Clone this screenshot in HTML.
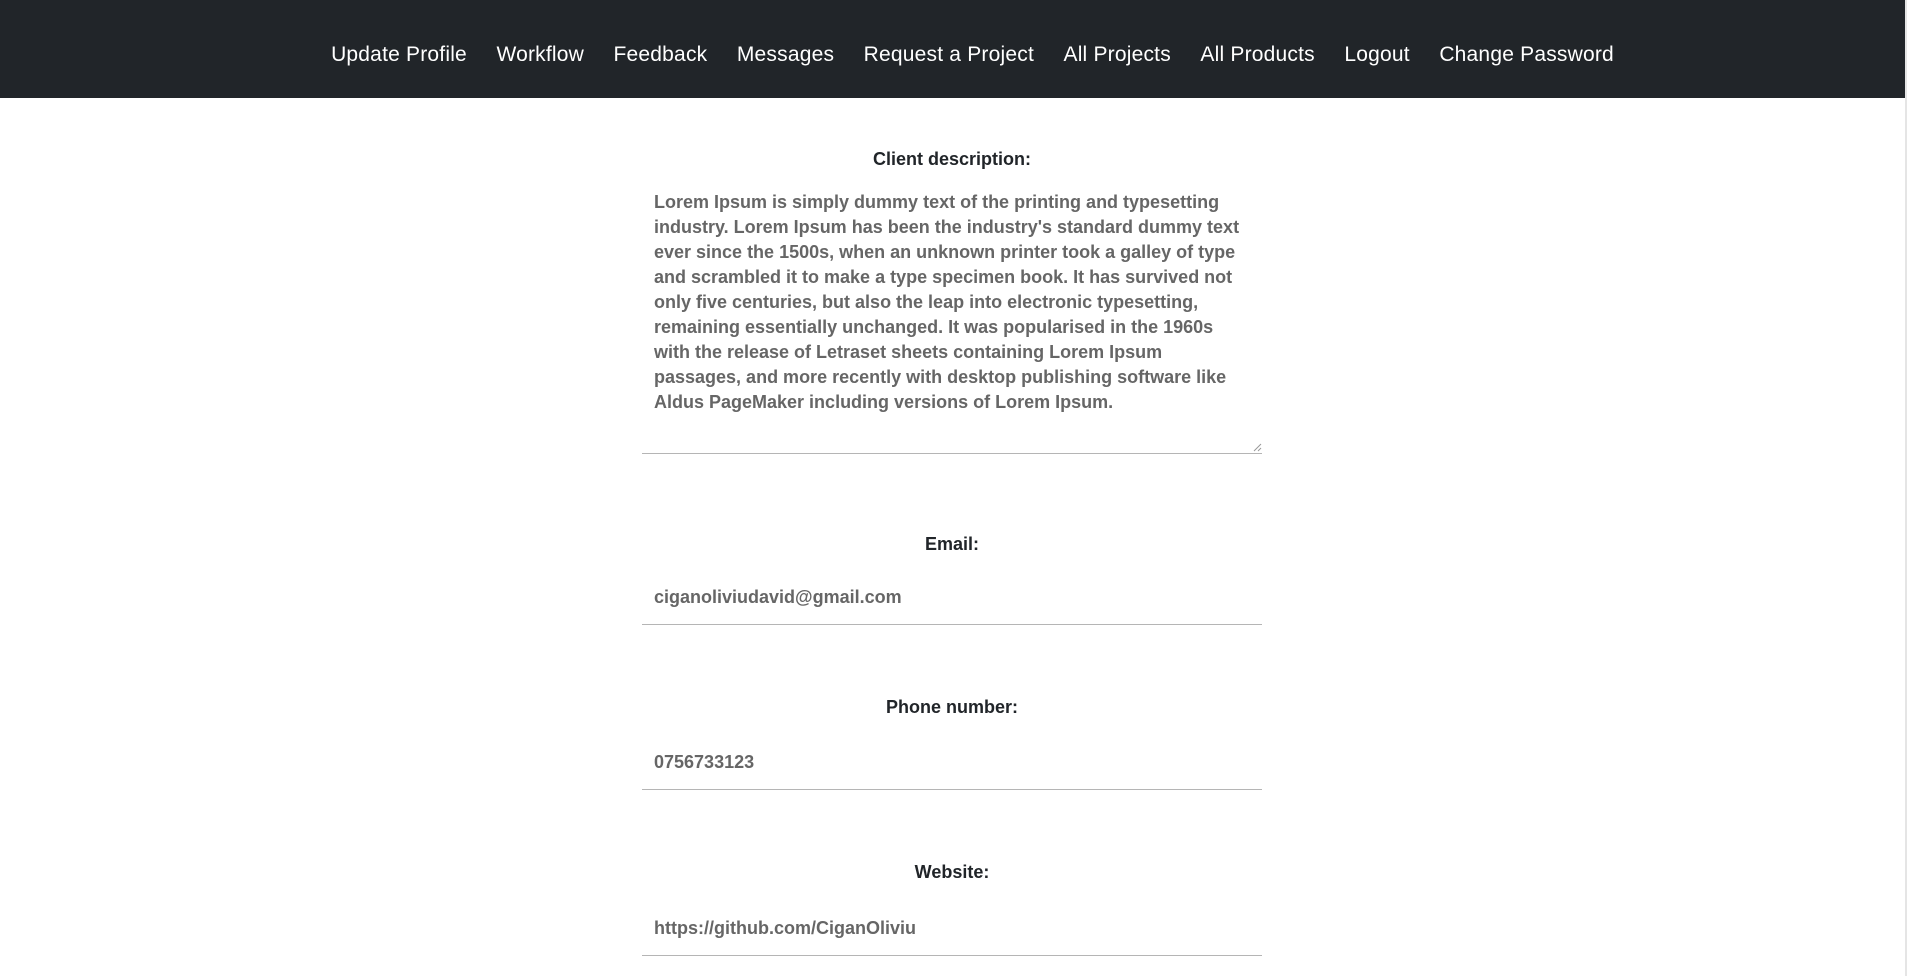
<!DOCTYPE html>
<html><head><style>
body{margin:0;width:1907px;height:976px;overflow:hidden;background:#fff;font-family:"Liberation Sans",sans-serif;position:relative}
nav{position:absolute;left:0;top:0;width:1905px;height:98px;background:#212529;display:flex;justify-content:center;align-items:center;gap:29.5px;padding-top:11px;padding-left:40px;box-sizing:border-box}
nav span{color:#fff;font-size:21px;letter-spacing:0.2px}
.sb{position:absolute;right:0;top:0;width:2px;height:976px;background:#e5e5e5}
.lbl{position:absolute;left:642px;width:620px;text-align:center;font-weight:bold;font-size:18px;color:#212529;line-height:20px}
.val{position:absolute;left:654px;font-weight:bold;font-size:18px;color:#666;line-height:25px}
.line{position:absolute;left:642px;width:620px;height:1px;background:#b5b5b5}
</style></head><body>
<nav><span>Update Profile</span><span>Workflow</span><span>Feedback</span><span>Messages</span><span>Request a Project</span><span>All Projects</span><span>All Products</span><span>Logout</span><span>Change Password</span></nav>
<div class="sb"></div>
<div class="lbl" style="top:149px">Client description:</div>
<div class="val" style="top:190px;width:600px">Lorem Ipsum is simply dummy text of the printing and typesetting industry. Lorem Ipsum has been the industry's standard dummy text ever since the 1500s, when an unknown printer took a galley of type and scrambled it to make a type specimen book. It has survived not only five centuries, but also the leap into electronic typesetting, remaining essentially unchanged. It was popularised in the 1960s with the release of Letraset sheets containing Lorem Ipsum passages, and more recently with desktop publishing software like Aldus PageMaker including versions of Lorem Ipsum.</div>
<div class="line" style="top:453px"></div>
<svg style="position:absolute;left:1253px;top:443px" width="9" height="9"><path d="M8 1L1 8M8 5L5 8" stroke="#999" stroke-width="1"/></svg>
<div class="lbl" style="top:534px">Email:</div>
<div class="val" style="top:585px">ciganoliviudavid@gmail.com</div>
<div class="line" style="top:624px"></div>
<div class="lbl" style="top:697px">Phone number:</div>
<div class="val" style="top:750px">0756733123</div>
<div class="line" style="top:789px"></div>
<div class="lbl" style="top:862px">Website:</div>
<div class="val" style="top:916px">https://github.com/CiganOliviu</div>
<div class="line" style="top:955px"></div>
</body></html>
